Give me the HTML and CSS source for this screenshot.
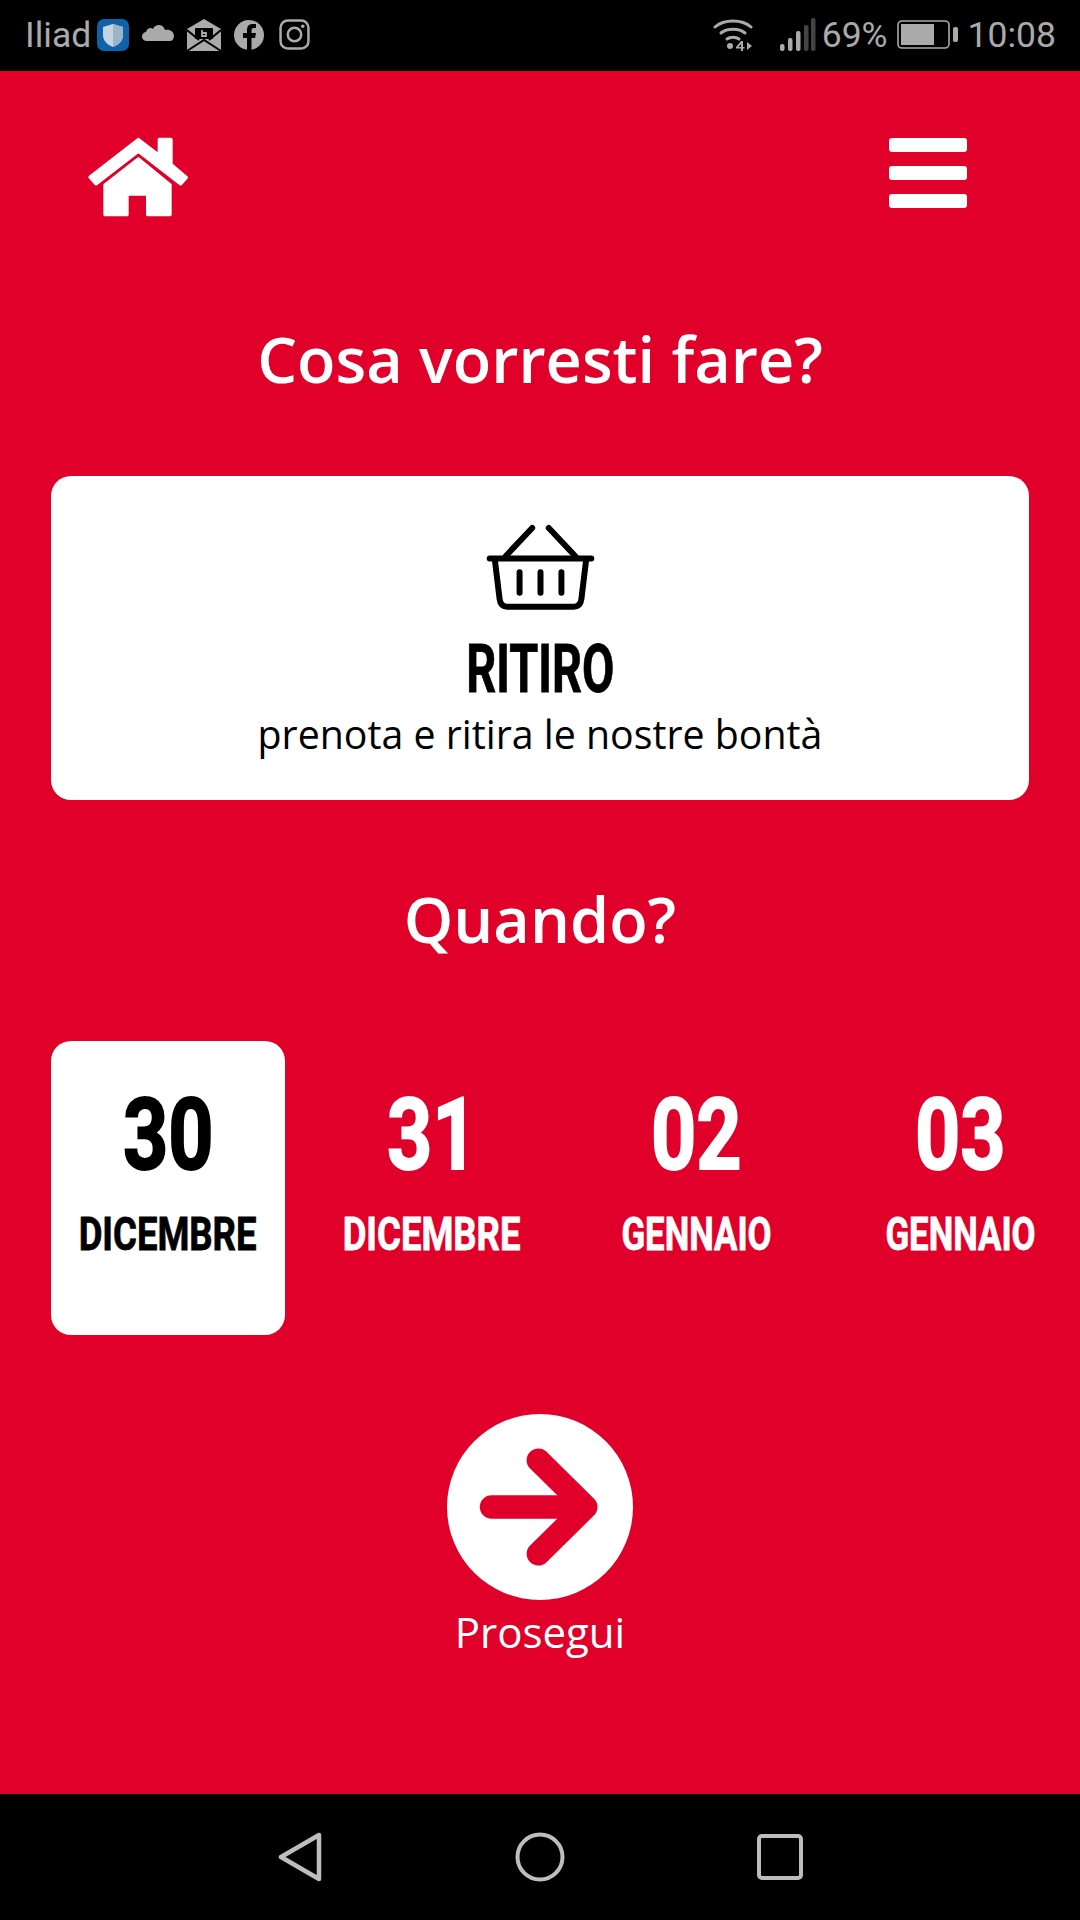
FILE: index.html
```html
<!DOCTYPE html>
<html lang="it">
<head>
<meta charset="utf-8">
<title>Cosa vorresti fare?</title>
<link rel="stylesheet" href="styles.css">
</head>
<body>
<div class="screen">
  <header class="status">
    <div class="status-left">
      <span class="carrier">Iliad</span>
      <svg class="ic-shield" viewBox="0 0 34 34"><rect x="1" y="1" width="32" height="32" rx="7" fill="#0f62a8"/><path d="M17 6l10 3v8c0 6-4 9.500-10 12-6-2.500-10-6-10-12V9z" fill="#c3d5e3"/><path d="M17 6l10 3v8c0 6-4 9.500-10 12z" fill="#9db4c6"/></svg>
      <svg class="ic-cloud" viewBox="0 0 34 20"><path d="M5 19a4.500 4.500 0 0 1-1-9c1-4 5-5 7-3 2-5 10-6 12 1 5-1 9 2 9 6 0 3-2 5-4 5z" fill="#aaa"/></svg>
      <svg class="ic-mail" viewBox="0 0 36 34"><path d="M18 1L1 11v22h34V11z" fill="#aaa"/><path d="M1 12l12 10M35 12L23 22M1 33l17-11 17 11" stroke="#000" stroke-width="2" fill="none"/><rect x="9" y="10" width="18" height="11" rx="1" fill="#000"/><path d="M16 12v6h4v-3h-4" stroke="#aaa" stroke-width="1.800" fill="none"/></svg>
      <svg class="ic-fb" viewBox="0 0 30 30"><circle cx="15" cy="15" r="15" fill="#aaa"/><path d="M13 30V18H9v-5h4V10c0-4 2-6 6-6h3v4h-2c-2 0-2.500 1-2.500 2.500V13H22l-1 5h-3.500v12z" fill="#000"/></svg>
      <svg class="ic-ig" viewBox="0 0 30 30"><rect x="1.500" y="1.500" width="27" height="27" rx="7" fill="none" stroke="#aaa" stroke-width="2.400"/><circle cx="15" cy="15" r="6.500" fill="none" stroke="#aaa" stroke-width="2.400"/><circle cx="23" cy="7" r="1.700" fill="#aaa"/></svg>
    </div>
    <div class="status-right">
      <svg class="ic-wifi" viewBox="0 0 40 34"><g fill="none" stroke="#aaa" stroke-width="3" stroke-linecap="round"><path d="M2 9C11 1 29 1 38 9"/><path d="M8 15c6-5 18-5 24 0"/><path d="M14 21c3-2.500 9-2.500 12 0"/></g><circle cx="17" cy="28" r="3" fill="#aaa"/><path d="M23 29l5-6h2v6h1.500v1.500H30V33h-2v-2.500h-5zM28 29v-3l-2.500 3z" fill="#aaa"/><path d="M34 24l5 4-5 4z" fill="#aaa"/></svg>
      <svg class="ic-signal" viewBox="0 0 36 34"><g fill="#aaa"><rect x="0" y="26" width="4.500" height="7" rx="2"/><rect x="8" y="20" width="4.500" height="13" rx="2"/><rect x="16" y="13" width="4.500" height="20" rx="2"/></g><g fill="#444"><rect x="24" y="7" width="4.500" height="26" rx="2"/><rect x="31" y="0" width="4.500" height="33" rx="2"/></g></svg>
      <span class="percent">69%</span>
      <svg class="ic-batt" viewBox="0 0 62 29"><rect x="1" y="1" width="51" height="27" rx="4" fill="none" stroke="#aaa" stroke-width="1.600"/><rect x="4" y="4" width="33" height="21" fill="#aaa"/><rect x="56" y="7" width="5" height="15" rx="2" fill="#aaa"/></svg>
      <span class="time">10:08</span>
    </div>
  </header>

  <main class="app">
    <nav class="topnav">
      <svg class="ic-home" viewBox="78 80 312 245"><g fill="#fff" stroke="#fff" stroke-linejoin="round"><path stroke-width="10" d="M90 203L235 90l63 48V90h35v75l46 39-17 19L235 125 108 223z"/><path stroke-width="8" d="M235 147L134 226V316H202V255H262V316H331V226z"/></g></svg>
      <div class="burger"><span></span><span></span><span></span></div>
    </nav>

    <h1 class="heading">Cosa vorresti fare?</h1>

    <section class="card">
      <svg class="ic-basket" viewBox="130 70 340 265"><g fill="none" stroke="#000" stroke-width="18" stroke-linecap="round" stroke-linejoin="round"><path d="M147 177H453"/><path d="M163 185L177 300Q180 322 200 322H400Q420 322 423 300L437 185"/><path d="M195 170L275 85M405 170L325 85"/><path d="M237 218V280M300 218V280M363 218V280"/></g></svg>
      <div class="card-title">RITIRO</div>
      <div class="card-sub">prenota e ritira le nostre bontà</div>
    </section>

    <h2 class="subheading">Quando?</h2>

    <section class="dates">
      <div class="date active"><div class="day">30</div><div class="month">DICEMBRE</div></div>
      <div class="date"><div class="day">31</div><div class="month">DICEMBRE</div></div>
      <div class="date"><div class="day">02</div><div class="month month-tight">GENNAIO</div></div>
      <div class="date"><div class="day">03</div><div class="month month-tight">GENNAIO</div></div>
    </section>

    <section class="next">
      <div class="next-btn">
        <svg class="ic-arrow" viewBox="82 42 556 556"><g fill="none" stroke="#e0002a" stroke-width="70" stroke-linecap="round" stroke-linejoin="round"><path d="M215 320H480"/><path d="M355 180L497 320 355 460"/></g></svg>
      </div>
      <div class="next-label">Prosegui</div>
    </section>
  </main>

  <footer class="navbar">
    <svg class="ic-back" viewBox="0 0 44 50"><path d="M3 25L41 3v44z" fill="none" stroke="#bdbdbd" stroke-width="4.500" stroke-linejoin="round"/></svg>
    <svg class="ic-circle" viewBox="0 0 50 50"><circle cx="25" cy="25" r="22.500" fill="none" stroke="#bdbdbd" stroke-width="4"/></svg>
    <svg class="ic-square" viewBox="0 0 46 46"><rect x="2" y="2" width="42" height="42" rx="3" fill="none" stroke="#bdbdbd" stroke-width="4"/></svg>
  </footer>
</div>
</body>
</html>
```
FILE: styles.css
```css
* { box-sizing: border-box; }
html, body { margin: 0; padding: 0; }
body { width: 1080px; height: 1920px; overflow: hidden; background: #000; font-family: "Open Sans", sans-serif; }
.screen { width: 1080px; height: 1920px; display: flex; flex-direction: column; }

.status { height: 71px; background: #000; color: #aaa; display: flex; justify-content: space-between; align-items: center; padding: 0 24px 2px 25px; font-family: Roboto, sans-serif; font-size: 35.500px; flex: none; }
.status-left, .status-right { display: flex; align-items: center; }
.ic-shield { width: 34px; height: 34px; margin-left: 5px; }
.ic-cloud { width: 34px; height: 20px; margin-left: 12px; margin-bottom: 6px; }
.ic-mail { width: 36px; height: 34px; margin-left: 10px; }
.ic-fb { width: 30px; height: 30px; margin-left: 12px; }
.ic-ig { width: 31px; height: 31px; margin-left: 15px; }
.ic-wifi { width: 40px; height: 34px; }
.ic-signal { width: 36px; height: 34px; margin-left: 27px; }
.percent { margin-left: 6px; }
.ic-batt { width: 62px; height: 29px; margin-left: 9px; }
.time { margin-left: 9px; }

.app { flex: 1; background: #e0002a; color: #fff; display: flex; flex-direction: column; align-items: center; }
.topnav { width: 100%; height: 140px; flex: none; display: flex; justify-content: space-between; padding: 65px 113px 0 86px; }
.ic-home { width: 104px; height: 82px; }
.burger { width: 78px; height: 70px; display: flex; flex-direction: column; justify-content: space-between; margin-top: 2px; }
.burger span { display: block; height: 14px; background: #fff; border-radius: 3px; }

.heading { margin: 0; padding-top: 107px; font-size: 63px; line-height: 82px; font-weight: 600; }
.card { width: 978px; height: 324px; margin-top: 76px; background: #fff; border-radius: 20px; color: #000; display: flex; flex-direction: column; align-items: center; padding-top: 47px; flex: none; }
.ic-basket { width: 113px; height: 88px; flex: none; }
.card-title { font-family: Roboto, sans-serif; font-weight: 700; font-size: 66px; line-height: 70px; margin-top: 24px; transform: scaleX(0.71); -webkit-text-stroke: 0.8px #000; }
.card-sub { font-size: 39.300px; line-height: 52px; margin-top: 3px; }
.subheading { margin: 0; padding-top: 78px; font-size: 63px; line-height: 82px; font-weight: 600; }

.dates { width: 100%; display: flex; gap: 30px; padding-left: 51px; margin-top: 81px; flex: none; }
.date { width: 234px; height: 294px; flex: none; border-radius: 20px; display: flex; flex-direction: column; align-items: center; padding-top: 42px; }
.date.active { background: #fff; color: #000; }
.day { font-family: Roboto, sans-serif; font-weight: 700; font-size: 100px; line-height: 104px; transform: scaleX(0.79); -webkit-text-stroke: 2px currentColor; }
.month { font-family: Roboto, sans-serif; font-weight: 700; font-size: 47px; line-height: 54px; margin-top: 20px; white-space: nowrap; transform: scaleX(0.776); -webkit-text-stroke: 0.8px currentColor; }
.month-tight { transform: scaleX(0.74); }

.next { display: flex; flex-direction: column; align-items: center; margin-top: 79px; }
.next-btn { width: 186px; height: 186px; border-radius: 50%; background: #fff; display: flex; }
.ic-arrow { width: 186px; height: 186px; }
.next-label { font-size: 42px; line-height: 56px; margin-top: 4px; }

.navbar { height: 126px; flex: none; background: #000; display: flex; align-items: center; padding: 0 0 0 278px; }
.ic-back { width: 44px; height: 50px; }
.ic-circle { width: 50px; height: 50px; margin-left: 193px; }
.ic-square { width: 46px; height: 46px; margin-left: 192px; }
```
